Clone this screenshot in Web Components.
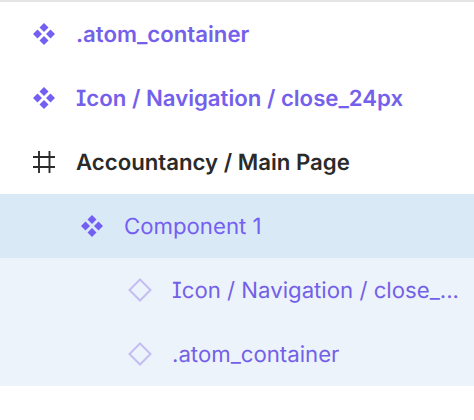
<!DOCTYPE html>
<html>
<head>
<meta charset="utf-8">
<style>
  html, body { margin: 0; padding: 0; background: #fff; }
  body { font-family: Inter, "Liberation Sans", sans-serif; }
</style>
</head>
<body>
<layer-panel>
  <layer-row icon="components" tone="master">.atom_container</layer-row>
  <layer-row icon="components" tone="master">Icon / Navigation / close_24px</layer-row>
  <layer-row icon="frame" tone="frame">Accountancy / Main Page</layer-row>
  <layer-row icon="components" tone="selected" depth="1">Component 1</layer-row>
  <layer-row icon="instance" tone="child" depth="2">Icon / Navigation / close_...</layer-row>
  <layer-row icon="instance" tone="child" depth="2">.atom_container</layer-row>
</layer-panel>
<script>
  const ICONS = {
    components: `<svg width="24" height="24" viewBox="0 0 24 24" fill="#7360f2">
      <path d="M12 1l4.500 4.500L12 10 7.500 5.500z"/><path d="M5.500 7.500L10 12l-4.500 4.500L1 12z"/>
      <path d="M18.500 7.500L23 12l-4.500 4.500L14 12z"/><path d="M12 14l4.500 4.500L12 23l-4.500-4.500z"/></svg>`,
    frame: `<svg width="24" height="24" viewBox="0 0 24 24" fill="none" stroke="#2c2c2c" stroke-width="1.900">
      <path d="M1 7h22M1 17h22M7 1v22M17.500 1v22"/></svg>`,
    instance: `<svg width="24" height="24" viewBox="0 0 24 24" fill="none" stroke="#c4bdf3" stroke-width="2">
      <path d="M12 1.500L22.500 12 12 22.500 1.500 12z"/></svg>`
  };

  class LayerPanel extends HTMLElement {
    constructor() {
      super();
      this.attachShadow({ mode: 'open' });
      this.shadowRoot.innerHTML = `
        <style>
          :host { display: block; width: 474px; height: 420px; box-sizing: border-box; border-top: 2px solid #e5e5e5; background: #fff; }
          .list { display: flex; flex-direction: column; }
        </style>
        <div class="list"><slot></slot></div>`;
    }
  }

  class LayerRow extends HTMLElement {
    constructor() {
      super();
      this.attachShadow({ mode: 'open' });
    }

    connectedCallback() {
      const depth = Number(this.getAttribute('depth') || 0);
      const icon = this.getAttribute('icon') || 'frame';
      this.shadowRoot.innerHTML = `
        <style>
          :host {
            display: flex; align-items: center; gap: 20px; height: 64px;
            box-sizing: border-box; padding-left: ${32 + depth * 48}px;
            font-size: 22.200px; line-height: 1; white-space: nowrap;
            font-family: Inter, "Liberation Sans", sans-serif;
            font-feature-settings: "cv08";
            text-rendering: geometricPrecision;
          }
          :host([tone="master"]) { color: #7560ec; font-weight: 600; }
          :host([tone="frame"]) { color: #2a2a2a; font-weight: 600; }
          :host([tone="selected"]) { color: #7360f2; background: #dae9f6; }
          :host([tone="child"]) { color: #7360e8; background: #ecf3fa; }
          .icon { display: flex; flex: none; width: 24px; height: 24px; }
          .label { padding-top: 2px; }
        </style>
        <span class="icon">${ICONS[icon]}</span>
        <span class="label"><slot></slot></span>`;
    }
  }

  customElements.define('layer-panel', LayerPanel);
  customElements.define('layer-row', LayerRow);
</script>
</body>
</html>
